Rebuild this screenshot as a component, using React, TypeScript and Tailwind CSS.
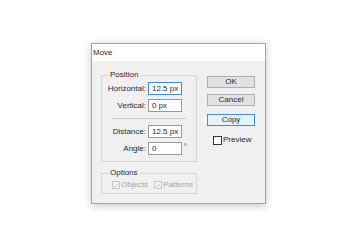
const CheckMark = () => (
  <svg viewBox="0 0 8 8" className="h-[7px] w-[7px]">
    <path d="M1.2 4.2 L3.2 6.1 L6.9 1.6" fill="none" stroke="#b5b5b5" strokeWidth="1" />
  </svg>
)

type FieldRowProps = {
  label: string
  value: string
  focused?: boolean
  suffix?: string
}

const FieldRow = ({ label, value, focused, suffix }: FieldRowProps) => (
  <div className="flex h-[13px] items-center">
    <span className="w-[45px] pr-[2px] text-right">{label}</span>
    <div
      className={`flex h-[13px] w-[34px] items-center border bg-white pl-[3px] text-[#2a2a2a] ${
        focused ? 'border-[#3d8ee0]' : 'border-[#9a9a9a]'
      }`}
    >
      {value}
    </div>
    {suffix && <span className="ml-[2px] -mt-[3px] text-[7px]">{suffix}</span>}
  </div>
)

export default function App() {
  return (
    <div className="min-h-[251px] w-[360px] bg-white pl-[91px] pt-[43px] font-['Liberation_Sans',Arial,sans-serif] text-[8px] leading-[10px] text-[#2a2a2a]">
      <div className="flex w-[175px] flex-col border border-[#a3a3a3] bg-[#f0f0f0] pb-[9px] shadow-[0_2px_8px_rgba(0,0,0,0.22)]">
        {/* Title bar */}
        <div className="h-[17px] bg-white pl-[1px] leading-[17px]">Move</div>

        <div className="flex gap-[10px] pl-[9px]">
          {/* Left column */}
          <div className="flex w-[96px] flex-col pt-[9px]">
            <fieldset className="border border-[#d6d6d6] px-[1px] pb-[6px] pt-[2px]">
              <legend className="ml-[5px] px-[2px] leading-[10px]">Position</legend>
              <div className="flex flex-col gap-[4px]">
                <FieldRow label="Horizontal:" value="12.5 px" focused />
                <FieldRow label="Vertical:" value="0 px" />
              </div>
              <div className="mx-[9px] my-[6px] h-px bg-[#cfcfcf]" />
              <div className="flex flex-col gap-[4px]">
                <FieldRow label="Distance:" value="12.5 px" />
                <FieldRow label="Angle:" value="0" suffix="°" />
              </div>
            </fieldset>

            <fieldset className="mt-[6px] border border-[#d6d6d6] pb-[4px] pl-[10px] pt-[3px] text-[#a5a5a5]">
              <legend className="-ml-[4px] px-[2px] leading-[10px] text-[#2a2a2a]">Options</legend>
              <div className="flex h-[8px] items-center">
                <span className="flex h-[8px] w-[8px] items-center justify-center border border-[#c8c8c8] bg-[#f4f4f4]">
                  <CheckMark />
                </span>
                <span className="ml-[1px]">Objects</span>
                <span className="ml-[6px] flex h-[8px] w-[8px] items-center justify-center border border-[#c8c8c8] bg-[#f4f4f4]">
                  <CheckMark />
                </span>
                <span className="ml-[1px]">Patterns</span>
              </div>
            </fieldset>
          </div>

          {/* Right column */}
          <div className="flex w-[48px] flex-col pt-[15px]">
            <button className="h-[12px] border border-[#b0b0b0] bg-[#e1e1e1] leading-[10px]">OK</button>
            <button className="mt-[6px] h-[12px] border border-[#b0b0b0] bg-[#e1e1e1] leading-[10px]">Cancel</button>
            <button className="mt-[8px] h-[12px] border border-[#3d8ee0] bg-[#e5f1fb] leading-[10px]">Copy</button>
            <div className="mt-[9px] flex items-center pl-[6px]">
              <span className="h-[9px] w-[9px] border border-[#333] bg-white" />
              <span className="ml-[1px]">Preview</span>
            </div>
          </div>
        </div>
      </div>
    </div>
  )
}
